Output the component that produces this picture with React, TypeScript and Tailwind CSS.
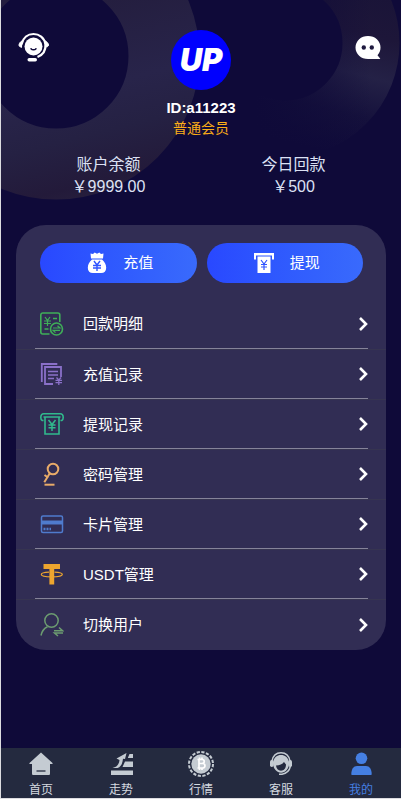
import type { ReactNode } from "react";

const yuan = "M0 0l3 4 3-4M3 4v6M0 4.500h6M0 7h6";

function Rings() {
  return (
    <svg className="pointer-events-none absolute top-0 left-0" width="400" height="210" aria-hidden="true">
      <defs>
        <linearGradient id="ringA" gradientUnits="userSpaceOnUse" x1="100" y1="0" x2="150" y2="200">
          <stop offset="0" stopColor="#241e3f" />
          <stop offset="0.4" stopColor="#28244a" />
          <stop offset="0.62" stopColor="#252143" />
          <stop offset="0.85" stopColor="#231a3a" />
          <stop offset="1" stopColor="#29233f" />
        </linearGradient>
        <linearGradient id="ringB" gradientUnits="userSpaceOnUse" x1="360" y1="-10" x2="320" y2="150">
          <stop offset="0" stopColor="#1a1438" />
          <stop offset="0.25" stopColor="#1d1639" />
          <stop offset="0.5" stopColor="#242146" />
          <stop offset="0.75" stopColor="#15113c" />
          <stop offset="1" stopColor="#0f0a39" />
        </linearGradient>
        <linearGradient id="fade" gradientUnits="userSpaceOnUse" x1="255" y1="0" x2="370" y2="0">
          <stop offset="0" stopColor="#0f0a39" />
          <stop offset="1" stopColor="#0f0a39" stopOpacity="0" />
        </linearGradient>
      </defs>
      <circle cx="284" cy="43" r="86" fill="none" stroke="url(#ringB)" strokeWidth="57" />
      <circle cx="284" cy="43" r="86" fill="none" stroke="url(#fade)" strokeWidth="59" />
      <circle cx="55" cy="56" r="108" fill="none" stroke="url(#ringA)" strokeWidth="71" />
    </svg>
  );
}

function AgentIcon() {
  return (
    <svg width="32" height="32" viewBox="0 0 32 32" fill="none" stroke="#fff">
      <circle cx="15.500" cy="14.500" r="9" fill="#fff" stroke="none" />
      <path d="M3.500 12.500C5 5.500 10 2 15.500 2S26.500 5.500 27.500 12.500c.3 6-3 10.500-8 12.500" strokeWidth="2.200" />
      <path d="M4.500 8.500c-2 1-3.500 3-3.500 4.500s1 2 3 2.300M26.500 8.500c2.500 1 4 3 4 4.500s-1.500 2-3.500 2.300" fill="#fff" strokeWidth="1" />
      <path d="M13 16.700c1.300 1.500 3.700 1.500 5 0" stroke="#0f0a39" strokeWidth="1.500" strokeLinecap="round" />
      <rect x="9.500" y="26" width="9.500" height="3.500" rx="1.700" fill="#fff" stroke="none" />
    </svg>
  );
}

function ChatIcon() {
  return (
    <svg width="26" height="24" viewBox="0 0 26 24">
      <path fill="#fff" d="M13 0C6 0 .5 4.800.5 11.500S6 23 13 23h12c.4 0 .4-.3.100-.5l-2.600-3.300c1.900-2 3-4.700 3-7.700C25.500 4.800 20 0 13 0Z" />
      <circle cx="8.800" cy="11.500" r="2.200" fill="#1f1a3f" />
      <circle cx="16.800" cy="11.500" r="2.200" fill="#1f1a3f" />
    </svg>
  );
}

function BagIcon() {
  return (
    <svg width="20" height="22" viewBox="0 0 20 22">
      <path fill="#fff" d="M3.500 1.500 6 2l1.700-1.500L10 1.800 12.300.5 14 2l2.500-.5-.5 5H4ZM5 7.500h10c2.500 2 4.200 5 4.200 8.200 0 3.500-2 5.300-5 5.300H5.800c-3 0-5-1.800-5-5.300C.8 12.500 2.500 9.500 5 7.500Z" />
      <g transform="translate(7 9)">
        <path d="M0 0l3 4 3-4M3 4v6M-1 4.500h8M-1 7h8" fill="none" stroke="#3054ff" strokeWidth="1.400" />
      </g>
    </svg>
  );
}

function CashOutIcon() {
  return (
    <svg width="20" height="20" viewBox="0 0 20 20">
      <path fill="#fff" d="M0 0h20v6.500h-2V2.500H2v4H0Z" />
      <path fill="#fff" d="M3.500 3.500h13V20h-13Z" />
      <g transform="translate(7 7)">
        <path d={yuan} fill="none" stroke="#3054ff" strokeWidth="1.200" />
      </g>
    </svg>
  );
}

function RowIcon({ color, children }: { color: string; children: ReactNode }) {
  return (
    <svg width="24" height="24" viewBox="0 0 24 24" fill="none" stroke={color} strokeWidth="1.600" aria-hidden="true">
      {children}
    </svg>
  );
}

const rows: { label: string; icon: ReactNode }[] = [
  {
    label: "回款明细",
    icon: (
      <RowIcon color="#3fae58">
        <path d="M9.500 22H2.800a2 2 0 0 1-2-2V3a2 2 0 0 1 2-2h15a2 2 0 0 1 2 2v7M13 6.500h4M4.500 17h4" />
        <path d="m5 5 2.500 3.500L10 5M7.500 8.500V14M4 9h7M4 11.500h7" strokeWidth="1.200" />
        <circle cx="16.500" cy="17" r="6" />
        <path d="M13 16h7l-2.500-2.300M20 18.300h-7l2.500 2.300" strokeWidth="1.200" />
      </RowIcon>
    ),
  },
  {
    label: "充值记录",
    icon: (
      <RowIcon color="#8a70c9">
        <path d="M1.800 20V2h15.500" strokeWidth="1.800" />
        <path d="M13 22H5V5h16v10" strokeWidth="1.800" />
        <path d="M8 9.500h10M8 13h10M8 16.500h6" strokeWidth="1.500" />
        <path d="m16.500 15.500 2.300 2.500 2.300-2.500M18.800 18v5M15.500 18.300h6.500M15.500 20.700h6.500" strokeWidth="1.300" />
      </RowIcon>
    ),
  },
  {
    label: "提现记录",
    icon: (
      <RowIcon color="#31b98d">
        <path d="M3.500 8.500H2.200C1.200 8 .8 7 .8 5.500c0-2.500 1-3.800 3-3.800h16.400c2 0 3 1.300 3 3.800 0 1.500-.4 2.500-1.400 3h-1.300" />
        <path d="M5 5v17h14V5M3.500 5h17" />
        <path d="m8.500 8 3.500 4.500L15.500 8M12 12.500v6.500M8.500 13h7M8.500 15.700h7" strokeWidth="1.500" />
      </RowIcon>
    ),
  },
  {
    label: "密码管理",
    icon: (
      <RowIcon color="#e8ab69">
        <circle cx="13" cy="7" r="5.300" strokeWidth="2" />
        <path d="m9.800 11.300-5.500 9M4.500 13l3.800 2.800" strokeWidth="2" />
        <path d="M4.500 22.700h10" strokeWidth="2" />
      </RowIcon>
    ),
  },
  {
    label: "卡片管理",
    icon: (
      <RowIcon color="#4f7bcd">
        <rect x="1.500" y="4" width="21" height="16.500" rx="1.500" strokeWidth="1.500" />
        <path d="M1 10.500h22" strokeWidth="4" />
        <path d="M3.500 17h2M6.500 17h2M9.500 17h1.500" strokeWidth="2.500" />
      </RowIcon>
    ),
  },
  {
    label: "USDT管理",
    icon: (
      <RowIcon color="#eda52f">
        <path d="M3.500 4.500h16.500M11.800 5v17.500" strokeWidth="4.800" />
        <path d="M9 10.200c-4.500.2-7.700 1.100-7.700 2.300 0 1.400 4.700 2.400 10.500 2.400s10.500-1 10.500-2.400c0-1.200-3.300-2.100-7.800-2.300" strokeWidth="1.200" />
      </RowIcon>
    ),
  },
  {
    label: "切换用户",
    icon: (
      <RowIcon color="#6c9c70">
        <circle cx="11.500" cy="7.500" r="6.700" strokeWidth="1.500" />
        <path d="M1 22.500c.8-4 3-7.200 6.500-8.800" strokeWidth="1.500" />
        <path d="M14 17.700h8.500L19 14.500M23 20h-8.500l3.500 3" strokeWidth="1.500" />
      </RowIcon>
    ),
  },
];

const tabs: { label: string; active?: boolean; icon: ReactNode }[] = [
  {
    label: "首页",
    icon: (
      <g fill="#c4cbd2">
        <path d="M13 1.500 24.500 12c.5.500.2 1-.5 1h-2v9.500c0 1-.5 1.500-1.500 1.500h-15C4.500 24 4 23.500 4 22.500V13H2c-.7 0-1-.5-.5-1Z" />
        <path d="M8.500 20h9" stroke="#242a3f" strokeWidth="1.300" />
      </g>
    ),
  },
  {
    label: "走势",
    icon: (
      <g fill="#c4cbd2">
        <path d="M3 19.500h22V24H3ZM3 17c5 0 8-3 8.500-8L8.500 7.500 18.500 2l-1.500 6-2-.3C14.500 12.500 13 16 9.500 17ZM20 6.500 21.500 3H25v4h-5ZM14.500 16 17 10.500h8V16Z" />
      </g>
    ),
  },
  {
    label: "行情",
    icon: (
      <g>
        <circle cx="13" cy="13" r="12" fill="none" stroke="#c4cbd2" strokeWidth="2" strokeDasharray="3.200 1.510" />
        <circle cx="13" cy="13" r="9.700" fill="#c4cbd2" />
        <path d="M9.500 8.500h4.500c3 0 3 4 0 4h-3 3.500c3.300 0 3.300 4.500 0 4.500h-5M11 8.500V17M11.500 6.500v2M14 6.500v2M11.500 17v2M14 17v2" fill="none" stroke="#fff" strokeWidth="1.700" />
      </g>
    ),
  },
  {
    label: "客服",
    icon: (
      <g fill="#c4cbd2">
        <path d="M4 10C5 4.500 8.500 1.800 13 1.800S21 4.500 22 10" fill="none" stroke="#c4cbd2" strokeWidth="1.400" />
        <path d="M5 11C6 6.500 9 4 13 4s7 2.500 8 7c.5 5-2 8.500-5 10-2 1-4 .9-6 0C7 19.500 4.700 16 5 11Z" />
        <path d="M8 14.500c3.500 0 6.500-1.500 8-3.500l2 2.500c0 3.800-2 6.200-5 6.200s-4.700-2.200-5-5.200Z" fill="#242a3f" />
        <rect x="2" y="9" width="3.500" height="7" rx="1.700" />
        <rect x="20.500" y="9" width="3.500" height="7" rx="1.700" />
        <path d="M22.500 15c-1 4.500-4 7.500-8.500 8.200h-3" fill="none" stroke="#c4cbd2" strokeWidth="1.500" />
      </g>
    ),
  },
  {
    label: "我的",
    active: true,
    icon: (
      <g fill="#457fe2">
        <circle cx="13.500" cy="7.300" r="5.800" />
        <path d="M4 24c-.5 0-.7-.3-.7-.8C3.300 18.500 5.500 15 9 15h9c3.500 0 5.700 3.500 5.700 8.200 0 .5-.2.8-.7.8Z" />
      </g>
    ),
  },
];

function Balance({ label, value }: { label: string; value: string }) {
  return (
    <div className="flex-1 text-center text-[16px] leading-[22px] text-[#dce1f4]">
      <p>{label}</p>
      <p>{value}</p>
    </div>
  );
}

function PillButton({ label, icon }: { label: string; icon: ReactNode }) {
  return (
    <button type="button" className="flex h-10 flex-1 items-center justify-center gap-4 rounded-full bg-linear-to-r from-[#2948ff] to-[#396afc] pl-1 text-[15px] text-white">
      {icon}
      {label}
    </button>
  );
}

export default function App() {
  return (
    <div className="relative flex min-h-screen flex-col overflow-hidden border-b border-l border-[#dcdce0] bg-[#0f0a39] font-['Liberation_Sans','Noto_Sans_CJK_SC',sans-serif]">
      <Rings />
      <header className="relative grid grid-cols-[1fr_auto_1fr] items-start px-4 pt-[30px]">
        <button type="button" aria-label="客服" className="mt-0.5 ml-px justify-self-start">
          <AgentIcon />
        </button>
        <div className="flex flex-col items-center">
          <div className="flex size-[60px] items-center justify-center rounded-full bg-[#0000fe] font-['Inter',sans-serif] text-[31px] font-black text-white italic">
            UP
          </div>
          <p className="mt-2 text-[15px] leading-5 font-bold text-white">ID:a11223</p>
          <p className="text-[14px] leading-5 text-[#fbae18]">普通会员</p>
        </div>
        <button type="button" aria-label="消息" className="mt-1.5 mr-1 justify-self-end">
          <ChatIcon />
        </button>
      </header>
      <section className="relative mx-[15px] mt-4 flex">
        <Balance label="账户余额" value="￥9999.00" />
        <Balance label="今日回款" value="￥500" />
      </section>

      <main className="relative mx-[15px] mt-[27px] mb-6 rounded-[30px] bg-[#312d54] pt-[18px] pb-px">
        <div className="flex gap-2.5 pr-[23px] pl-6">
          <PillButton label="充值" icon={<BagIcon />} />
          <PillButton label="提现" icon={<CashOutIcon />} />
        </div>
        <ul className="mt-4">
          {rows.map((row, i) => (
            <li key={row.label} className={i === 0 ? "flex h-[50px]" : "flex h-[50px] border-t border-[#363450]"}>
              <a
                href="#"
                className={
                  i === rows.length - 1
                    ? "mr-[18px] ml-[19px] flex flex-1 items-center pl-[5px] text-[15px] text-white"
                    : "mr-[18px] ml-[19px] flex flex-1 items-center border-b border-[#858399] pl-[5px] text-[15px] text-white"
                }
              >
                {row.icon}
                <span className="ml-[19px] flex-1 pt-0.5">{row.label}</span>
                <svg width="9" height="14" viewBox="0 0 9 14" fill="none" stroke="#fff" strokeWidth="2.600" aria-hidden="true">
                  <path d="m1 1 6 6-6 6" />
                </svg>
              </a>
            </li>
          ))}
        </ul>
      </main>

      <nav className="relative mt-auto flex h-[50px] bg-[#242a3f]">
        {tabs.map((tab) => (
          <a
            key={tab.label}
            href="#"
            className={
              tab.active
                ? "flex flex-1 flex-col items-center pt-[3px] text-[12px] leading-4 text-[#457fe2]"
                : "flex flex-1 flex-col items-center pt-[3px] text-[12px] leading-4 text-[#d5dae0]"
            }
          >
            <svg width="26" height="26" viewBox="0 0 26 26" aria-hidden="true">
              {tab.icon}
            </svg>
            <span className="mt-[5px]">{tab.label}</span>
          </a>
        ))}
      </nav>
    </div>
  );
}
